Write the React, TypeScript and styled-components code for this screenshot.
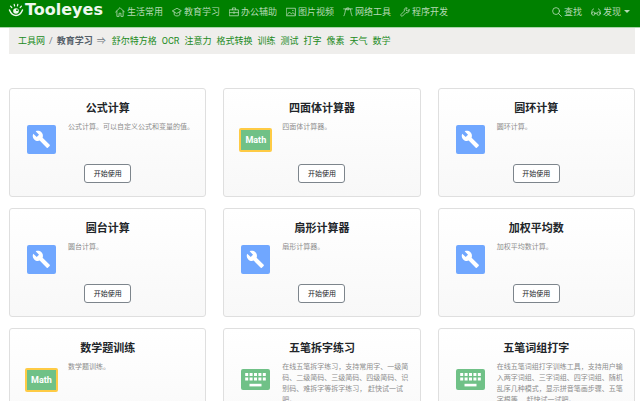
import React from 'react';
import styled, { createGlobalStyle } from 'styled-components';

const GlobalStyle = createGlobalStyle`
  * { box-sizing: border-box; }
  html { overflow: hidden; }
  body {
    margin: 0;
    background: #fff;
    color: #212529;
    font-family: Roboto, "Noto Sans CJK SC", sans-serif;
    font-size: 9px;
    line-height: 14px;
  }
  a { text-decoration: none; }
`;

const Navbar = styled.header`
  display: flex;
  align-items: center;
  height: 28px;
  padding: 0 10px 4px 8px;
  background: #008000;
  border-bottom: 1px solid #a9d5a9;
`;

const Brand = styled.a`
  display: flex;
  align-items: center;
  gap: 1px;
  margin-right: 12px;
  padding-bottom: 3px;
  color: #eef8ee;
  svg { flex: none; }
`;

const BrandName = styled.span`
  font: 700 16px/18px "DejaVu Sans", sans-serif;
`;

const NavList = styled.nav<{ $end?: boolean }>`
  display: flex;
  gap: 9px;
  margin-left: ${(p) => (p.$end ? 'auto' : '0')};
`;

const NavLink = styled.a`
  display: flex;
  align-items: center;
  gap: 2px;
  color: #b5dab5;
  white-space: nowrap;
`;

const LineIcon = styled.svg`
  flex: none;
  width: 10px;
  height: 10px;
  fill: none;
  stroke: currentColor;
  stroke-width: 1.3;
  stroke-linecap: round;
  stroke-linejoin: round;
`;

const Caret = styled.i`
  margin-left: 1px;
  border: 3px solid transparent;
  border-top-color: currentColor;
  border-bottom: 0;
`;

const Main = styled.main`
  padding: 0 5px 0 9px;
`;

const Crumbs = styled.nav`
  display: flex;
  align-items: center;
  height: 26px;
  padding: 0 9px;
  background: #efeeec;
  color: #6c757d;
`;

const Current = styled.strong`
  color: #56606a;
`;

const Separator = styled.span`
  margin: 0 4px;
`;

const CrumbLink = styled.a`
  color: #218a21;
`;

const Tags = styled.div`
  display: flex;
  gap: 5px;
  margin-left: 2px;
`;

const Grid = styled.section`
  display: grid;
  grid-template-columns: repeat(3, 1fr);
  gap: 11px 17px;
  margin-top: 34px;
`;

const Card = styled.article`
  display: flex;
  flex-direction: column;
  align-items: center;
  min-height: 109px;
  padding: 11px 9px 13px;
  border: 1px solid #dfdfdf;
  border-radius: 3px;
  background: linear-gradient(#fff, #f8f8f8);
`;

const Title = styled.h2`
  margin: 0;
  font-size: 11px;
  line-height: 18px;
`;

const CardBody = styled.div`
  display: grid;
  grid-template-columns: 37px 1fr;
  gap: 8px;
  width: 100%;
  margin-top: 4px;
  padding-left: 4px;
`;

const IconCell = styled.div`
  display: grid;
  place-items: center;
  height: 35px;
`;

const Description = styled.p`
  margin: 0;
  color: #8d8d8d;
  font-size: 7px;
  line-height: 11px;
`;

const UseButton = styled.button`
  width: 47px;
  height: 19px;
  margin-top: auto;
  padding: 0;
  border: 1px solid #7d858c;
  border-radius: 3px;
  background: #fff;
  color: #212529;
  font: 7px/12px Roboto, "Noto Sans CJK SC", sans-serif;
`;

type IconKind = 'wrench' | 'math' | 'keyboard';

const MathBadge = styled.span`
  width: 33px;
  height: 24px;
  border: 2px solid #fecb45;
  border-radius: 2px;
  background: #70c187;
  color: #fff;
  font: 700 9px/20px Roboto, sans-serif;
  text-align: center;
`;

const WrenchIcon = () => (
  <svg width="29" height="29" viewBox="0 0 29 29" aria-hidden="true">
    <rect width="29" height="29" rx="2" fill="#70a7ff" />
    <path transform="translate(5 5) scale(.78)" fill="#fff" d="M22.7 19l-9.1-9.1c.9-2.3.4-5-1.5-6.900-2-2-5-2.400-7.400-1.300L9 6 6 9 1.600 4.700C.4 7.100.9 10.100 2.900 12.100c1.900 1.900 4.600 2.400 6.900 1.500l9.100 9.100c.4.4 1 .4 1.400 0l2.300-2.300c.5-.4.5-1.100.1-1.400z" />
  </svg>
);

const KeyboardIcon = () => (
  <svg width="29" height="21" viewBox="0 0 29 21" aria-hidden="true">
    <rect width="29" height="21" rx="2" fill="#70c187" />
    {[4, 8.5].map((y) => [4.2, 8.6, 13, 17.4, 21.8].map((x) => (
      <rect key={`${x}-${y}`} x={x} y={y} width="3" height="3" fill="#fff" />
    )))}
    <rect x="8.500" y="14.800" width="12" height="2.600" fill="#fff" />
  </svg>
);

const EyeLogo = () => (
  <svg width="16" height="14" viewBox="0 0 16 14" fill="none" stroke="currentColor" strokeLinecap="round" aria-hidden="true">
    <path strokeWidth="1.500" d="M1.500 7C3 10.800 5 12.500 8 12.500s5-1.700 6.500-5.500" />
    <path strokeWidth="1.200" d="M2.500 3.200l1.300 1.300M6.200 1.300l.4 1.700M9.800 1.300l-.4 1.700M13.500 3.200l-1.300 1.300" />
    <circle cx="8" cy="8" r="2.800" fill="currentColor" stroke="none" />
    <circle cx="9" cy="7.200" r=".9" fill="#008000" stroke="none" />
  </svg>
);

const CardIcon = ({ kind }: { kind: IconKind }) => {
  if (kind === 'math') return <MathBadge>Math</MathBadge>;
  return kind === 'wrench' ? <WrenchIcon /> : <KeyboardIcon />;
};

const paths = {
  house: 'M1 8L8 1l7 7M3 6.500V15h3.500v-5h3v5H13V6.500',
  school: 'M1 6l7-4 7 4-7 4zM3.500 8v4.500C6 15 10 15 12.500 12.500V8',
  briefcase: 'M1 4.500h14V14H1zM5.500 4.500V1.500h5v3M1 9h14M8 7.500v3',
  image: 'M1 2h14v12H1zM2 12l3.500-4 3 3 2.500-2 4 3.500M10.500 5.500h1',
  network: 'M1 3h14M4 3.500C3.500 8 3 11 1.500 14M12 3.500c.5 4.500 1 7.500 2.500 10.500M6.500 1.500h3v3h-3z',
  wrench: 'M14.500 4.500l-3 2-2-2 2-3C8.500.500 6 3 7 6.500L1.500 12c-1 1.500 1 3.500 2.500 2.500L9.500 9c3.500 1 6-1.500 5-4.500z',
  search: 'M12 6.500a5.500 5.500 0 1 1-11 0a5.500 5.500 0 0 1 11 0zM10.500 10.500L15 15',
  glasses: 'M6.500 10.500a2.700 2.700 0 1 1-5.400 0a2.700 2.700 0 0 1 5.400 0zM14.900 10.500a2.700 2.700 0 1 1-5.400 0a2.700 2.700 0 0 1 5.400 0zM6.500 10q1.500-1 3 0M1.100 10.500C1.100 6 2 3.500 4 3M14.900 10.500C14.900 6 14 3.500 12 3',
};

const NavIcon = ({ name }: { name: keyof typeof paths }) => (
  <LineIcon viewBox="0 0 16 16" aria-hidden="true"><path d={paths[name]} /></LineIcon>
);

const navItems: { label: string; icon: keyof typeof paths }[] = [
  { label: '生活常用', icon: 'house' },
  { label: '教育学习', icon: 'school' },
  { label: '办公辅助', icon: 'briefcase' },
  { label: '图片视频', icon: 'image' },
  { label: '网络工具', icon: 'network' },
  { label: '程序开发', icon: 'wrench' },
];

const tags = ['舒尔特方格', 'OCR', '注意力', '格式转换', '训练', '测试', '打字', '像素', '天气', '数学'];

const tools: { title: string; text: string; icon: IconKind }[] = [
  { title: '公式计算', text: '公式计算。可以自定义公式和变量的值。', icon: 'wrench' },
  { title: '四面体计算器', text: '四面体计算器。', icon: 'math' },
  { title: '圆环计算', text: '圆环计算。', icon: 'wrench' },
  { title: '圆台计算', text: '圆台计算。', icon: 'wrench' },
  { title: '扇形计算器', text: '扇形计算器。', icon: 'wrench' },
  { title: '加权平均数', text: '加权平均数计算。', icon: 'wrench' },
  { title: '数学题训练', text: '数学题训练。', icon: 'math' },
  { title: '五笔拆字练习', text: '在线五笔拆字练习，支持常用字、一级简码、二级简码、三级简码、四级简码、识别码、难拆字等拆字练习， 赶快试一试吧。', icon: 'keyboard' },
  { title: '五笔词组打字', text: '在线五笔词组打字训练工具，支持用户输入两字词组、三字词组、四字词组、随机乱序几种模式，显示拼音笔画步骤、五笔字根等， 赶快试一试吧。', icon: 'keyboard' },
];

export default function App() {
  return (
    <>
      <GlobalStyle />
      <Navbar>
        <Brand href="#"><EyeLogo /><BrandName>Tooleyes</BrandName></Brand>
        <NavList>
          {navItems.map(({ label, icon }) => (
            <NavLink key={label} href="#"><NavIcon name={icon} />{label}</NavLink>
          ))}
        </NavList>
        <NavList $end>
          <NavLink href="#"><NavIcon name="search" />查找</NavLink>
          <NavLink href="#"><NavIcon name="glasses" />发现<Caret /></NavLink>
        </NavList>
      </Navbar>
      <Main>
        <Crumbs>
          <CrumbLink href="#">工具网</CrumbLink>
          <Separator>/</Separator>
          <Current>教育学习</Current>
          <Separator>⇒</Separator>
          <Tags>
            {tags.map((tag) => <CrumbLink key={tag} href="#">{tag}</CrumbLink>)}
          </Tags>
        </Crumbs>
        <Grid>
          {tools.map((tool) => (
            <Card key={tool.title}>
              <Title>{tool.title}</Title>
              <CardBody>
                <IconCell><CardIcon kind={tool.icon} /></IconCell>
                <Description>{tool.text}</Description>
              </CardBody>
              <UseButton type="button">开始使用</UseButton>
            </Card>
          ))}
        </Grid>
      </Main>
    </>
  );
}
